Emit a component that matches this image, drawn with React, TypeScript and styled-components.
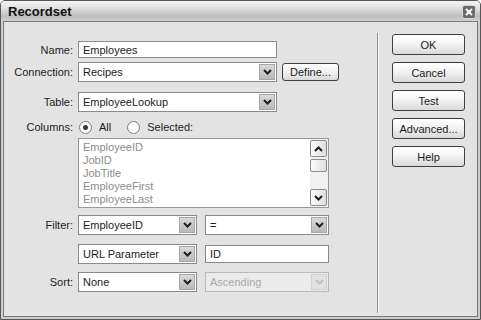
import React from "react";
import styled, { createGlobalStyle } from "styled-components";

const GlobalStyle = createGlobalStyle`
    html, body {
        margin: 0;
        padding: 0;
        background: #ffffff;
    }

    body {
        font-family: "Liberation Sans", Arial, sans-serif;
        font-size: 11px;
        color: #1c1c1c;
    }
`;

const Window = styled.div`
    width: 481px;
    height: 320px;
    box-sizing: border-box;
    border: 1px solid #555;
    border-radius: 5px 5px 0 0;
    background: #cdcdcd;
    display: flex;
    flex-direction: column;
    overflow: hidden;
`;

const TitleBar = styled.div`
    height: 20px;
    flex: none;
    display: flex;
    align-items: center;
    justify-content: space-between;
    padding: 1px 4px 0 7px;
    box-sizing: border-box;
    background: linear-gradient(#f4f4f4 0%, #e2e2e2 35%, #bdbdbd 75%, #cfcfcf 100%);
    font-size: 13px;
    font-weight: bold;
    color: #111;
`;

const Body = styled.div`
    flex: 1;
    margin: 0 2px 2px;
    border: 1px solid #7a7a7a;
    background: #e3e3e3;
    display: flex;
`;

const FormArea = styled.div`
    width: 373px;
    flex: none;
    display: flex;
    flex-direction: column;
`;

const Separator = styled.div`
    width: 1px;
    flex: none;
    background: #8e8e8e;
    box-shadow: 1px 0 0 #f8f8f8;
    margin: 11px 0 3px;
`;

const ButtonColumn = styled.div`
    display: flex;
    flex-direction: column;
    gap: 7px;
    padding: 12px 0 0 14px;
`;

const Button = styled.div<{ $w?: number; $h?: number; $ml?: number }>`
    width: ${p => p.$w || 73}px;
    height: ${p => p.$h || 21}px;
    margin-left: ${p => p.$ml || 0}px;
    box-sizing: border-box;
    border: 1px solid #3f3f3f;
    border-radius: 3px;
    background: linear-gradient(#ffffff 0%, #f3f3f3 45%, #d9d9d9 100%);
    display: flex;
    align-items: center;
    justify-content: center;
    color: #1c1c1c;
    flex: none;
`;

const Row = styled.div<{ $top: number; $h: number }>`
    display: flex;
    align-items: center;
    height: ${p => p.$h}px;
    margin-top: ${p => p.$top}px;
`;

const Label = styled.div`
    width: 74px;
    padding-right: 5px;
    box-sizing: border-box;
    text-align: right;
    flex: none;
`;

const TextField = styled.div<{ $w: number; $h: number; $ml?: number }>`
    width: ${p => p.$w}px;
    height: ${p => p.$h}px;
    margin-left: ${p => p.$ml || 0}px;
    box-sizing: border-box;
    border: 1px solid #8a8a8a;
    background: #fff;
    padding-left: 4px;
    display: flex;
    align-items: center;
    flex: none;
`;

const SelectBox = styled.div<{ $w: number; $ml?: number; $disabled?: boolean }>`
    width: ${p => p.$w}px;
    height: 20px;
    margin-left: ${p => p.$ml || 0}px;
    box-sizing: border-box;
    border: 1px solid ${p => (p.$disabled ? "#b9b9b9" : "#8a8a8a")};
    background: ${p => (p.$disabled ? "#ebebeb" : "#fff")};
    color: ${p => (p.$disabled ? "#a9a9a9" : "#1c1c1c")};
    display: flex;
    align-items: center;
    flex: none;
`;

const SelectText = styled.div`
    flex: 1;
    padding-left: 4px;
`;

const ArrowBox = styled.div<{ $disabled?: boolean }>`
    width: 16px;
    height: 16px;
    margin-right: 1px;
    box-sizing: border-box;
    border: 1px solid ${p => (p.$disabled ? "#d2d2d2" : "#a6a6a6")};
    background: ${p =>
        p.$disabled ? "#e2e2e2" : "linear-gradient(#d9d9d9, #b9b9b9)"};
    display: flex;
    align-items: center;
    justify-content: center;
    color: ${p => (p.$disabled ? "#c2c2c2" : "#1e1e1e")};
`;

const RadioOption = styled.div<{ $ml?: number }>`
    display: flex;
    align-items: center;
    gap: 7px;
    margin-left: ${p => p.$ml || 0}px;
`;

const RadioCircle = styled.div<{ $checked?: boolean }>`
    width: 13px;
    height: 13px;
    box-sizing: border-box;
    border-radius: 50%;
    border: 1px solid #7c7c7c;
    background: #fff;
    display: flex;
    align-items: center;
    justify-content: center;

    &::after {
        content: '';
        width: 5px;
        height: 5px;
        border-radius: 50%;
        background: ${p => (p.$checked ? "#3a3a3a" : "transparent")};
    }
`;

const ListBox = styled.div`
    width: 251px;
    height: 70px;
    margin-left: 74px;
    margin-top: 4px;
    box-sizing: border-box;
    border: 1px solid #9a9a9a;
    background: #fff;
    display: flex;
`;

const ListItems = styled.div`
    flex: 1;
    padding: 2px 0 0 4px;
    color: #8d8d8d;
    line-height: 13px;
`;

const ScrollBar = styled.div`
    width: 17px;
    padding: 1px 1px 1px 0;
    display: flex;
    flex-direction: column;
    background: #f1f1f1;
`;

const ScrollButton = styled.div<{ $h: number; $mt?: number }>`
    height: ${p => p.$h}px;
    margin-top: ${p => p.$mt || 0}px;
    box-sizing: border-box;
    border: 1px solid #8c8c8c;
    border-radius: 2px;
    background: linear-gradient(90deg, #fbfbfb, #dedede);
    display: flex;
    align-items: center;
    justify-content: center;
    color: #1e1e1e;
`;

const Spacer = styled.div`
    flex: 1;
`;

const Chevron: React.FC<{ up?: boolean }> = ({ up }) => (
    <svg width="9" height="6" viewBox="0 0 9 6">
        <path
            d={up ? "M1 5 L4.5 1.5 L8 5" : "M1 1 L4.5 4.5 L8 1"}
            fill="none"
            stroke="currentColor"
            strokeWidth="2"
        />
    </svg>
);

const CloseIcon = () => (
    <svg width="14" height="14" viewBox="0 0 14 14">
        <rect x="0.5" y="0.5" width="13" height="13" rx="2" fill="#6c6c6c" stroke="#d8d8d8" />
        <path d="M4 4 L10 10 M10 4 L4 10" stroke="#fff" strokeWidth="2" />
    </svg>
);

const Select: React.FC<{ w: number; ml?: number; disabled?: boolean; value: string }> = ({ w, ml, disabled, value }) => (
    <SelectBox $w={w} $ml={ml} $disabled={disabled}>
        <SelectText>{value}</SelectText>
        <ArrowBox $disabled={disabled}><Chevron /></ArrowBox>
    </SelectBox>
);

const columns = ["EmployeeID", "JobID", "JobTitle", "EmployeeFirst", "EmployeeLast"];

export default function App() {
    return (
        <>
            <GlobalStyle />
            <Window>
                <TitleBar>
                    <span>Recordset</span>
                    <CloseIcon />
                </TitleBar>
                <Body>
                    <FormArea>
                        <Row $top={19} $h={17}>
                            <Label>Name:</Label>
                            <TextField $w={199} $h={17}>Employees</TextField>
                        </Row>
                        <Row $top={4} $h={20}>
                            <Label>Connection:</Label>
                            <Select w={199} value="Recipes" />
                            <Button $w={57} $h={18} $ml={5}>Define...</Button>
                        </Row>
                        <Row $top={10} $h={20}>
                            <Label>Table:</Label>
                            <Select w={199} value="EmployeeLookup" />
                        </Row>
                        <Row $top={8} $h={14}>
                            <Label>Columns:</Label>
                            <RadioOption $ml={1}>
                                <RadioCircle $checked />
                                All
                            </RadioOption>
                            <RadioOption $ml={16}>
                                <RadioCircle />
                                Selected:
                            </RadioOption>
                        </Row>
                        <ListBox>
                            <ListItems>
                                {columns.map(c => <div key={c}>{c}</div>)}
                            </ListItems>
                            <ScrollBar>
                                <ScrollButton $h={17}><Chevron up /></ScrollButton>
                                <ScrollButton $h={13} $mt={2} />
                                <Spacer />
                                <ScrollButton $h={17}><Chevron /></ScrollButton>
                            </ScrollBar>
                        </ListBox>
                        <Row $top={7} $h={20}>
                            <Label>Filter:</Label>
                            <Select w={119} value="EmployeeID" />
                            <Select w={124} ml={8} value="=" />
                        </Row>
                        <Row $top={9} $h={20}>
                            <Label />
                            <Select w={119} value="URL Parameter" />
                            <TextField $w={124} $h={18} $ml={8}>ID</TextField>
                        </Row>
                        <Row $top={8} $h={20}>
                            <Label>Sort:</Label>
                            <Select w={119} value="None" />
                            <Select w={124} ml={8} value="Ascending" disabled />
                        </Row>
                    </FormArea>
                    <Separator />
                    <ButtonColumn>
                        <Button>OK</Button>
                        <Button>Cancel</Button>
                        <Button>Test</Button>
                        <Button>Advanced...</Button>
                        <Button>Help</Button>
                    </ButtonColumn>
                </Body>
            </Window>
        </>
    );
}
